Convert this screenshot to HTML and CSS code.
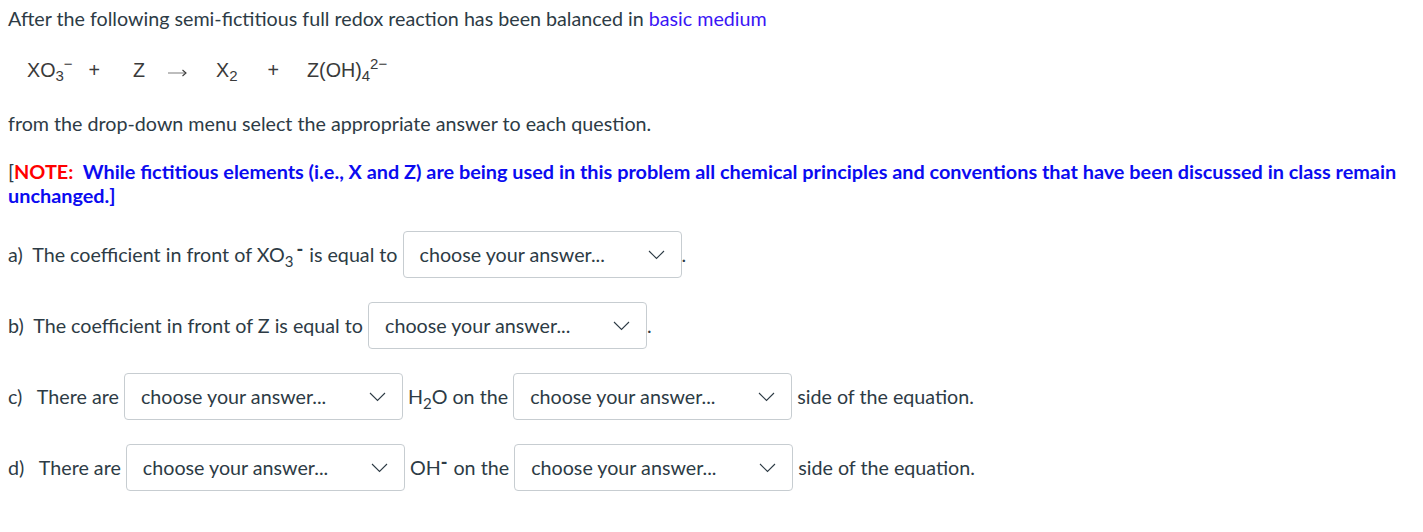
FILE: index.html
```html
<!DOCTYPE html>
<html>
<head>
<meta charset="utf-8">
<link rel="stylesheet" href="styles.css">
</head>
<body>
<div class="page">
  <p class="intro">After the following semi-fictitious full redox reaction has been balanced in <span class="violet">basic medium</span></p>
  <p class="eq"><span class="term t1">XO<sub>3</sub><sup>−</sup></span><span class="op o1">+</span><span class="term t2">Z</span><span class="op arrow"><svg class="arr" width="19" height="8" viewBox="0 0 19 8" aria-label="→"><path d="M0 4 H17.5" stroke="#9a9a9a" stroke-width="1.3" fill="none"/><path d="M14.5 1 L18 4 L14.5 7" stroke="#3a3a3a" stroke-width="1.1" fill="none"/></svg></span><span class="term t3">X<sub>2</sub></span><span class="op o2">+</span><span class="term t4">Z(OH)<sub>4</sub><sup>2−</sup></span></p>
  <p class="plain">from the drop-down menu select the appropriate answer to each question.</p>
  <p class="note"><span class="bracket">[</span><span class="red">NOTE:</span>&nbsp; While fictitious elements (i.e., X and Z) are being used in this problem all chemical principles and conventions that have been discussed in class remain unchanged.]</p>
  <div class="row">a)&nbsp; The coefficient in front of XO<sub class="s">3</sub><sup class="p pa">-</sup> is equal to <span class="select"><span class="label">choose your answer...</span><svg class="chev" width="17" height="10" viewBox="0 0 17 10"><path d="M1 1 L8.5 8.5 L16 1" fill="none" stroke="#2d3b45" stroke-width="1.1"/></svg></span><span class="dot">.</span></div>
  <div class="row">b)&nbsp; The coefficient in front of Z is equal to <span class="select"><span class="label">choose your answer...</span><svg class="chev" width="17" height="10" viewBox="0 0 17 10"><path d="M1 1 L8.5 8.5 L16 1" fill="none" stroke="#2d3b45" stroke-width="1.1"/></svg></span><span class="dot">.</span></div>
  <div class="row">c)&nbsp;&nbsp; There are <span class="select"><span class="label">choose your answer...</span><svg class="chev" width="17" height="10" viewBox="0 0 17 10"><path d="M1 1 L8.5 8.5 L16 1" fill="none" stroke="#2d3b45" stroke-width="1.1"/></svg></span> H<sub class="s">2</sub>O on the <span class="select"><span class="label">choose your answer...</span><svg class="chev" width="17" height="10" viewBox="0 0 17 10"><path d="M1 1 L8.5 8.5 L16 1" fill="none" stroke="#2d3b45" stroke-width="1.1"/></svg></span> side of the equation.</div>
  <div class="row">d)&nbsp;&nbsp; There are <span class="select"><span class="label">choose your answer...</span><svg class="chev" width="17" height="10" viewBox="0 0 17 10"><path d="M1 1 L8.5 8.5 L16 1" fill="none" stroke="#2d3b45" stroke-width="1.1"/></svg></span> OH<sup class="p pd">-</sup> on the <span class="select"><span class="label">choose your answer...</span><svg class="chev" width="17" height="10" viewBox="0 0 17 10"><path d="M1 1 L8.5 8.5 L16 1" fill="none" stroke="#2d3b45" stroke-width="1.1"/></svg></span> side of the equation.</div>
</div>
</body>
</html>
```
FILE: styles.css
```css
html, body {
  margin: 0;
  padding: 0;
  background: #ffffff;
}
body {
  font-family: Lato, "Open Sans", sans-serif;
  font-size: 19.7px;
  color: #2d3b45;
}
.page {
  padding: 7px 8px 0 8px;
}
p {
  margin: 0;
  line-height: 24px;
}
.violet {
  color: #3a16f5;
}
.intro {
  margin-bottom: 27px;
}
.eq {
  display: flex;
  align-items: baseline;
  font-family: "Liberation Sans", Arial, sans-serif;
  color: #3a3a3a;
  font-size: 19.7px;
  padding-left: 19px;
  margin-bottom: 30px;
  white-space: nowrap;
}
.eq sub, .eq sup {
  font-size: 15px;
  line-height: 0;
}
.eq sub { vertical-align: -4px; }
.eq sup { vertical-align: 8px; }
.term, .op {
  display: inline-block;
}
.o1 { margin-left: 16px; }
.t2 { margin-left: 33px; }
.arrow {
  margin-left: 23px;
  width: 19px;
}
.arr {
  vertical-align: 0px;
}
.t3 { margin-left: 29px; }
.o2 { margin-left: 30px; }
.t4 { margin-left: 28px; }
.plain {
  margin-bottom: 23px;
}
.note {
  font-weight: bold;
  font-size: 19.85px;
  color: #0b0bf0;
  margin-bottom: 24px;
}
.bracket {
  font-weight: normal;
  color: #2d3b45;
}
.red {
  color: #ff0000;
}
.row {
  height: 46px;
  line-height: 46px;
  margin-bottom: 25px;
  white-space: nowrap;
}
.row sub, .row sup {
  line-height: 0;
  font-size: 15px;
}
.row .s { vertical-align: -5px; }
.row .p { vertical-align: 6px; font-weight: 900; font-size: 18px; }
.row .pa { margin: 0 1px 0 3px; }
.row .pd { margin: 0 1px 0 0; }
.select {
  display: inline-flex;
  align-items: center;
  justify-content: space-between;
  box-sizing: border-box;
  width: 279px;
  height: 47px;
  border: 1px solid #c7cdd1;
  border-radius: 4px;
  padding: 0 16px 0 16px;
  line-height: 24px;
}
.label {
  color: #2d3b45;
}
.chev {
  display: block;
}
.dot {
  margin-left: 0;
}
```
